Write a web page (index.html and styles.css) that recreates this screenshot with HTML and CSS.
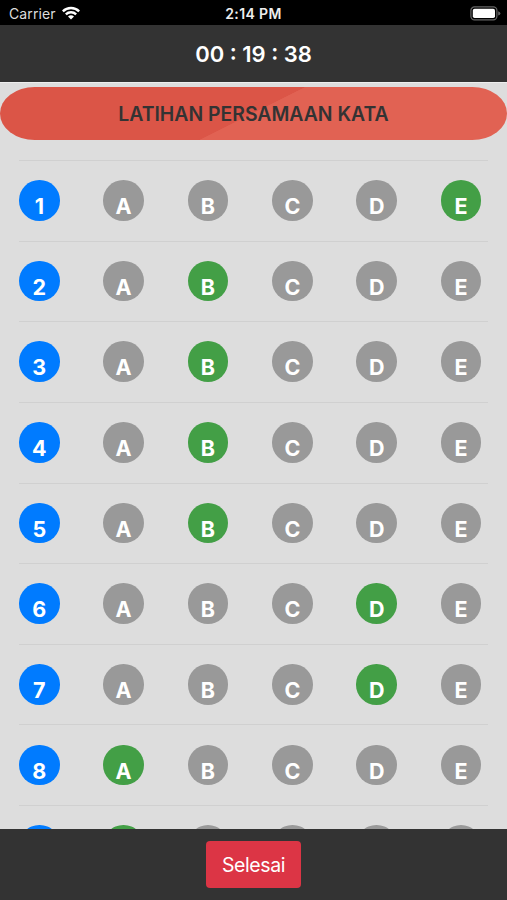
FILE: index.html
```html
<!DOCTYPE html>
<html lang="id">
<head>
<meta charset="utf-8">
<title>Latihan Persamaan Kata</title>
<link rel="stylesheet" href="styles.css">
</head>
<body>
<div class="app">
  <div class="status">
    <div class="carrier"><span class="carrier-name">Carrier</span>
      <svg class="wifi" viewBox="0 0 18 14"><path d="M0 4.4A13 13 0 0 1 18 4.4L16.3 6.2A10.5 10.5 0 0 0 1.7 6.2Z"/><path d="M3 7.5A8.7 8.7 0 0 1 15 7.5L13.3 9.2A6.2 6.2 0 0 0 4.7 9.2Z"/><path d="M6 10.6A4.3 4.3 0 0 1 12 10.6L9 13.6Z"/></svg>
    </div>
    <div class="clock">2:14 PM</div>
    <svg class="battery" viewBox="0 0 31 15"><rect x=".9" y=".9" width="26" height="13" rx="3.6" fill="none" stroke="#666" stroke-width="1.2"/><rect x="2.8" y="2.8" width="22.2" height="9.2" rx="1.8" fill="#fff"/><path d="M28.2 5.2Q30.4 6 30.4 7.4T28.2 9.6Z" fill="#666"/></svg>
  </div>
  <header class="timer">00 : 19 : 38</header>
  <main class="content">
    <h1 class="banner">LATIHAN PERSAMAAN KATA</h1>
    <div class="list">
      <div class="row"><b class="num">1</b><b>A</b><b>B</b><b>C</b><b>D</b><b class="on">E</b></div>
      <div class="row"><b class="num">2</b><b>A</b><b class="on">B</b><b>C</b><b>D</b><b>E</b></div>
      <div class="row"><b class="num">3</b><b>A</b><b class="on">B</b><b>C</b><b>D</b><b>E</b></div>
      <div class="row"><b class="num">4</b><b>A</b><b class="on">B</b><b>C</b><b>D</b><b>E</b></div>
      <div class="row"><b class="num">5</b><b>A</b><b class="on">B</b><b>C</b><b>D</b><b>E</b></div>
      <div class="row"><b class="num">6</b><b>A</b><b>B</b><b>C</b><b class="on">D</b><b>E</b></div>
      <div class="row"><b class="num">7</b><b>A</b><b>B</b><b>C</b><b class="on">D</b><b>E</b></div>
      <div class="row"><b class="num">8</b><b class="on">A</b><b>B</b><b>C</b><b>D</b><b>E</b></div>
      <div class="row"><b class="num"></b><b class="on"></b><b></b><b></b><b></b><b></b></div>
    </div>
  </main>
  <footer class="footer"><button class="finish">Selesai</button></footer>
</div>
</body>
</html>
```
FILE: styles.css
```css
* { box-sizing: border-box; }
body { margin: 0; font-family: Inter, "Liberation Sans", sans-serif; }
.app { height: 900px; display: flex; flex-direction: column; overflow: hidden; background: #ddd; }
.status {
  flex: none; height: 25px; padding: 2px 6px 0 9px; background: #000; color: #fff;
  display: grid; grid-template-columns: 1fr auto 1fr; align-items: center;
}
.carrier { display: flex; align-items: center; gap: 6px; font-size: 14px; color: #ddd; }
.carrier-name { letter-spacing: .1px; }
.wifi { width: 18px; height: 14px; fill: #fff; margin-top: -2px; }
.clock { font-size: 14px; font-weight: 600; letter-spacing: .4px; margin-left: -3px; color: #eee; }
.battery { width: 31px; height: 15px; justify-self: end; }
.timer {
  flex: none; height: 57px; background: #333; color: #fff;
  display: flex; align-items: center; justify-content: center;
  font-size: 22px; font-weight: 600; padding-top: 1px;
}
.content { flex: 1; min-height: 0; overflow: hidden; padding-top: 3.5px; border-top: 1px solid #eee; }
.banner {
  margin: 0 0 20px; height: 53.5px; border-radius: 35px / 26.75px; padding-top: 1px;
  display: flex; align-items: center; justify-content: center;
  font-size: 19.4px; font-weight: 600; color: #333;
  background: linear-gradient(153.4deg, #db5547 49.7%, #e16253 49.9%);
}
.list { padding: 0 19px; }
.row {
  height: 80.65px; border-top: 1px solid #d0d0d0; padding-top: 19.2px;
  display: grid; grid-template-columns: repeat(6, 84.35px);
}
.row b {
  width: 40.6px; height: 40.6px; border-radius: 50%; background: #999; color: #fff;
  font-size: 21.5px; font-weight: 650; line-height: 52px; text-align: center;
}
.row .num { background: #007bff; }
.row .on { background: #439f46; }
.footer { flex: none; height: 71.5px; background: #333; display: flex; justify-content: center; padding-top: 12.5px; }
.finish {
  width: 95px; height: 47px; padding: 0; border: 0; border-radius: 4px;
  background: #dc3545; color: #fff; font: 400 19.5px Inter, sans-serif; letter-spacing: -.4px;
}
```
